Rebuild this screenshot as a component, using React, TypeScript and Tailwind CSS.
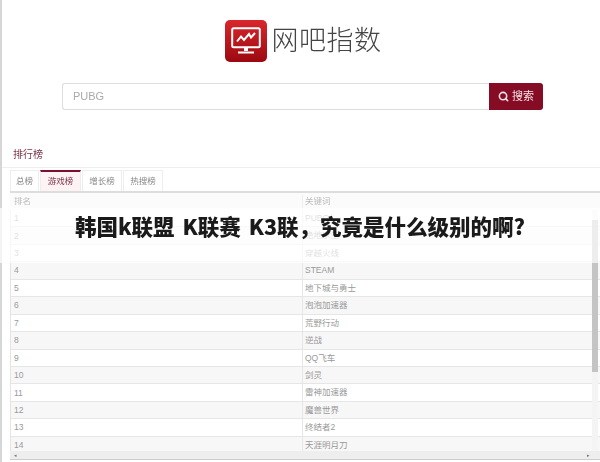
import { Search } from 'lucide-react';

const tabs = [
  { label: '总榜', width: 'w-[29px]' },
  { label: '游戏榜', width: 'w-[41px]' },
  { label: '增长榜', width: 'w-[40px]' },
  { label: '热搜榜', width: 'w-[40px]' },
];

const rows = [
  'PUBG',
  '绝地求生',
  '穿越火线',
  'STEAM',
  '地下城与勇士',
  '泡泡加速器',
  '荒野行动',
  '逆战',
  'QQ飞车',
  '剑灵',
  '雷神加速器',
  '魔兽世界',
  '终结者2',
  '天涯明月刀',
];

function Logo() {
  return (
    <div className="flex h-[42px] w-[42px] items-center justify-center rounded-[5px] bg-gradient-to-b from-[#d8262c] to-[#9c0810]">
      <svg width="30" height="28" viewBox="0 0 30 28" fill="none">
        <rect x="1.2" y="1.2" width="27.6" height="19" rx="1.5" stroke="#fff" strokeWidth="2" />
        <path d="M6 14.5 L10 9.5 L13 13 L18 7 L20 10.5 L24 6" stroke="#fff" strokeWidth="2" />
        <path d="M13 21 H17 V24 H13 Z" fill="#fff" />
        <path d="M7 24.5 H23 V26.5 H7 Z" fill="#fff" />
      </svg>
    </div>
  );
}

export default function App() {
  return (
    <div className="relative h-[462px] w-[600px] overflow-hidden bg-white font-['Liberation_Sans','Noto_Sans_CJK_SC',sans-serif]">
      <div className="h-full border-l-2 border-[#d6d6d6] blur-[0.6px]">
        {/* Header */}
        <div className="flex items-center justify-center gap-[5px] pl-[4px] pt-5">
          <Logo />
          <span className="text-[27px] font-light leading-[42px] tracking-[0.5px] text-[#444]">网吧指数</span>
        </div>

        {/* Search */}
        <div className="ml-[60px] mt-[21px] flex h-[27px] w-[481px]">
          <div className="flex flex-1 items-center rounded-l-[3px] border border-r-0 border-[#ddd] pl-[10px] text-[11px] text-[#aaa]">
            PUBG
          </div>
          <div className="flex w-[54px] items-center justify-center gap-[3px] rounded-r-[3px] bg-[#860b24] text-[11px] text-[#f3e3e6]">
            <Search size={11} strokeWidth={3.5} />
            搜索
          </div>
        </div>

        {/* Ranking */}
        <div className="ml-[11px] mt-[38px] text-[10px] leading-[14px] text-[#7c3347]">排行榜</div>
        <div className="mt-[5px] h-px bg-[#eee]" />

        <div className="ml-[8px] mt-[2px] flex h-[21px] gap-[1px] text-[8.5px] text-[#888]">
          {tabs.map((tab, i) => (
            <div
              key={tab.label}
              className={
                i === 1
                  ? `flex ${tab.width} items-center justify-center border-x border-t-2 border-[#eee] border-t-[#7a1030] bg-[#fdf3f4] text-[#7c3347]`
                  : `flex ${tab.width} items-center justify-center border-x border-t border-[#eee]`
              }
            >
              {tab.label}
            </div>
          ))}
        </div>

        {/* Table */}
        <div className="ml-[8px] border-t-2 border-[#ddd] text-[8.5px] text-[#999]">
          <div className="grid h-[17px] grid-cols-[292px_1fr] items-center bg-[#fbfbfb] text-[#bbb]">
            <span className="pl-[4px]">排名</span>
            <span className="border-l border-[#eee] pl-[2px]">关键词</span>
          </div>
          <div className="relative h-[241px] overflow-hidden border-l border-[#e4e4e4]">
            {rows.map((name, i) => (
              <div
                key={name}
                className={
                  i % 2 === 1
                    ? 'grid h-[17.45px] grid-cols-[291px_1fr] items-center border-b border-[#e6e6e6] bg-[#f7f7f7] pr-[9px]'
                    : 'grid h-[17.45px] grid-cols-[291px_1fr] items-center border-b border-[#e6e6e6] bg-white pr-[9px]'
                }
              >
                <span className="pl-[3px]">{i + 1}</span>
                <span className="h-full border-l border-[#e6e6e6] pl-[2px] leading-[17px]">{name}</span>
              </div>
            ))}
            {/* Scrollbar */}
            <div className="absolute right-[2px] top-0 flex h-full w-[6px] flex-col bg-[#f4f4f4]">
              <div className="mt-[10px] h-[152px] bg-[#c4c4c4]" />
            </div>
          </div>
          <div className="flex h-[9px] items-center justify-between border-b border-[#ccc] bg-[#eee] pl-[4px] pr-[10px] text-[5px] leading-none text-[#777]">
            <span>◂</span>
            <span>▸</span>
          </div>
        </div>
      </div>

      {/* Headline over the picture */}
      <div className="absolute left-0 top-[208px] h-[55px] w-full bg-white/70 pt-[2px] text-center font-['Noto_Sans_CJK_SC',sans-serif] text-[21.5px] font-black leading-[32px] text-[#1a1a1a] [word-spacing:3px] blur-[0.4px]">
        韩国k联盟 K联赛 K3联，究竟是什么级别的啊?
      </div>
    </div>
  );
}
